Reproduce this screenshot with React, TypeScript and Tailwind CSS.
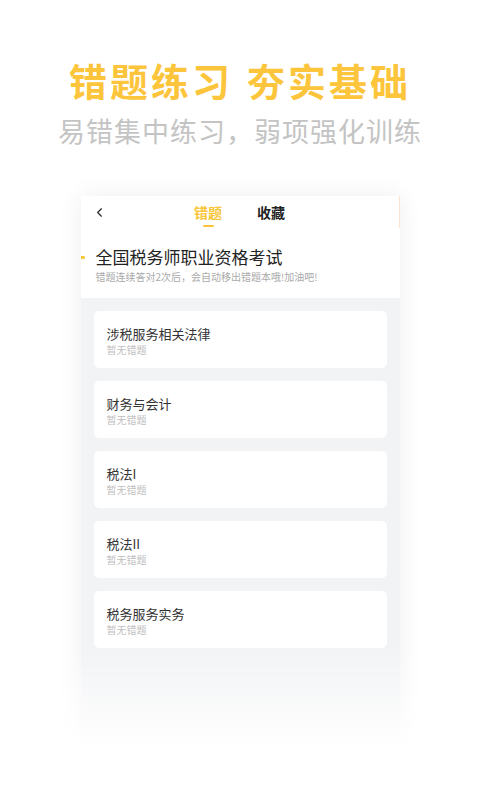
import { ChevronLeft } from 'lucide-react'

const FONT = { fontFamily: '"Noto Sans CJK SC", "Noto Sans", sans-serif' }

const subjects = ['涉税服务相关法律', '财务与会计', '税法I', '税法II', '税务服务实务']

// ─── Subject Card ──────────────────────────────────────────────────────────────
function SubjectCard({ name }: { name: string }) {
  return (
    <div className="bg-white rounded-[5px] h-[57px] px-[13px] pt-[14px] flex flex-col gap-[1px]">
      <div className="text-[13px] leading-[17px] text-[#333]">{name}</div>
      <div className="text-[10px] leading-[14px] text-[#c0c0c0]">暂无错题</div>
    </div>
  )
}

// ─── Phone Screen ──────────────────────────────────────────────────────────────
function PhoneScreen() {
  return (
    <div className="w-[319px] h-[580px] mx-auto bg-white shadow-[0_0_24px_rgba(0,0,0,0.07)] overflow-hidden flex flex-col">
      {/* Header */}
      <div className="bg-white pb-[14px]">
        <div className="h-[32px] grid grid-cols-[1fr_auto_1fr] items-center border-r border-[#fbe3d6]">
          <div className="pl-[11px] flex items-center">
            <ChevronLeft className="w-[15px] h-[15px] text-[#222]" strokeWidth={1.8} />
          </div>
          <div className="flex gap-[35px] pt-[5px]">
            <div className="flex flex-col items-center gap-[3px]">
              <span className="text-[14px] font-bold text-[#f8c537] leading-[20px]">错题</span>
              <span className="w-[11px] h-[2px] rounded-full bg-[#f8c537]" />
            </div>
            <span className="text-[14px] font-bold text-[#222] leading-[20px]">收藏</span>
          </div>
          <div />
        </div>
        <div className="mt-[17px] flex items-start gap-[11px]">
          <span className="mt-[11px] w-[4px] h-[3px] rounded-r-full bg-[#f8c537] shrink-0" />
          <div className="flex flex-col gap-[1px]">
            <div className="text-[17px] leading-[24px] text-[#222]">全国税务师职业资格考试</div>
            <div className="text-[10px] leading-[14px] text-[#aaa]">错题连续答对2次后，会自动移出错题本哦!加油吧!</div>
          </div>
        </div>
      </div>

      {/* List */}
      <div className="flex-1 bg-[#f2f3f5] px-[13px] pt-[13px] flex flex-col gap-[13px]">
        {subjects.map(s => <SubjectCard key={s} name={s} />)}
      </div>
    </div>
  )
}

export default function App() {
  return (
    <div className="w-[480px] h-[800px] bg-white overflow-hidden" style={FONT}>
      <div className="pt-[56px] text-center">
        <div className="text-[38px] leading-[48px] font-bold text-[#fcc53b] tracking-[3px]">
          错题练习<span className="inline-block w-[14px]" />夯实基础
        </div>
        <div className="mt-[9px] text-[27px] leading-[36px] text-[#c4c4c4] tracking-[1px]">
          易错集中练习，弱项强化训练
        </div>
      </div>
      <div className="relative mt-[47px]">
        <PhoneScreen />
        {/* Fade out over screen and its shadow */}
        <div className="absolute left-0 right-0 top-[450px] h-[100px] bg-gradient-to-b from-white/0 to-white" />
        <div className="absolute left-0 right-0 top-[550px] h-[100px] bg-white" />
      </div>
    </div>
  )
}
